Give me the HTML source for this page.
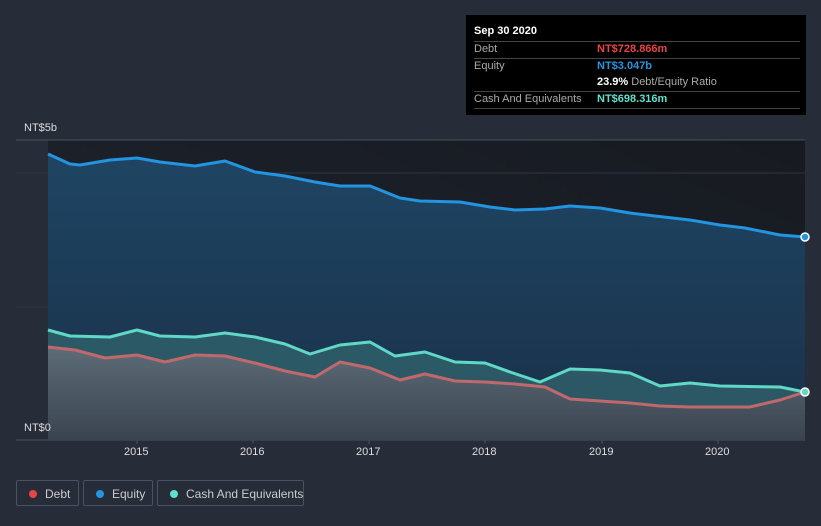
<!DOCTYPE html>
<html><head><style>
body{margin:0;width:821px;height:526px;background:#262c38;font-family:"Liberation Sans",sans-serif;overflow:hidden;position:relative}
.tt{position:absolute;left:466px;top:15px;width:340px;height:100px;background:#000;color:#fff;font-size:11px}
.tt .r{position:absolute;left:8px;right:6px;border-bottom:1px solid #444}
.tt .l{position:absolute;left:0;color:#aaa}
.tt .v{position:absolute;left:123px;font-weight:bold;white-space:nowrap}
.lg{position:absolute;top:480px;height:26px;border:1px solid #4a5160;border-radius:2px;color:#ccc;font-size:12px;line-height:26px;box-sizing:border-box;white-space:nowrap}
.lg i{position:absolute;left:12px;top:9px;width:8px;height:8px;border-radius:50%}
.lg span{position:absolute;left:28px}
.ax{position:absolute;color:#ddd;font-size:11px}
</style></head><body>
<svg width="821" height="526" style="position:absolute;left:0;top:0">
<defs>
<linearGradient id="pb" x1="0" y1="1" x2="1" y2="0"><stop offset="0" stop-color="#1f2532"/><stop offset="1" stop-color="#171a20"/></linearGradient>
<linearGradient id="eq" x1="0" y1="0" x2="0" y2="1"><stop offset="0" stop-color="#1e4563"/><stop offset="1" stop-color="#1a3048"/></linearGradient>
<linearGradient id="db" x1="0" y1="0" x2="0" y2="1"><stop offset="0" stop-color="#5d6c77"/><stop offset="1" stop-color="#3a4450"/></linearGradient>
</defs>
<rect x="48" y="140" width="757" height="300" fill="url(#pb)"/>
<line x1="16" y1="140" x2="805" y2="140" stroke="#4a505c"/>
<line x1="16" y1="173" x2="805" y2="173" stroke="#2f3540"/>
<line x1="16" y1="307" x2="805" y2="307" stroke="#2f3540"/>
<line x1="16" y1="440" x2="805" y2="440" stroke="#4a505c"/>
<g stroke="#4a505c"><line x1="137" y1="440" x2="137" y2="444"/><line x1="253" y1="440" x2="253" y2="444"/><line x1="369" y1="440" x2="369" y2="444"/><line x1="485" y1="440" x2="485" y2="444"/><line x1="602" y1="440" x2="602" y2="444"/><line x1="718" y1="440" x2="718" y2="444"/></g>
<path d="M48,154 L70,164 L80,165 L110,160 L137,158 L160,162 L195,166 L225,161 L255,172 L285,176 L315,182 L340,186 L370,186 L400,198 L420,201 L460,202 L490,207 L515,210 L545,209 L570,206 L600,208 L630,213 L655,216 L690,220 L720,225 L745,228 L780,235 L805,237 L805,440 L48,440Z" fill="url(#eq)"/>
<path d="M48,330 L70,336 L110,337 L137,330 L160,336 L195,337 L225,333 L255,337 L285,344 L310,354 L340,345 L370,342 L395,356 L425,352 L455,362 L485,363 L510,372 L540,382 L570,369 L600,370 L630,373 L660,386 L690,383 L720,386 L780,387 L805,392 L805,440 L48,440Z" fill="#2f5f6a" opacity="0.85"/>
<path d="M48,347 L75,350 L105,358 L137,355 L165,362 L195,355 L225,356 L255,363 L285,371 L315,377 L340,362 L370,368 L400,380 L425,374 L455,381 L485,382 L515,384 L545,387 L570,399 L600,401 L630,403 L660,406 L690,407 L720,407 L750,407 L780,400 L805,392 L805,440 L48,440Z" fill="url(#db)"/>
<g fill="none" stroke-width="3" stroke-linejoin="round">
<path d="M48,154 L70,164 L80,165 L110,160 L137,158 L160,162 L195,166 L225,161 L255,172 L285,176 L315,182 L340,186 L370,186 L400,198 L420,201 L460,202 L490,207 L515,210 L545,209 L570,206 L600,208 L630,213 L655,216 L690,220 L720,225 L745,228 L780,235 L805,237" stroke="#2394df"/>
<path d="M48,347 L75,350 L105,358 L137,355 L165,362 L195,355 L225,356 L255,363 L285,371 L315,377 L340,362 L370,368 L400,380 L425,374 L455,381 L485,382 L515,384 L545,387 L570,399 L600,401 L630,403 L660,406 L690,407 L720,407 L750,407 L780,400 L805,392" stroke="#c0686b"/>
<path d="M48,330 L70,336 L110,337 L137,330 L160,336 L195,337 L225,333 L255,337 L285,344 L310,354 L340,345 L370,342 L395,356 L425,352 L455,362 L485,363 L510,372 L540,382 L570,369 L600,370 L630,373 L660,386 L690,383 L720,386 L780,387 L805,392" stroke="#5fd8c6"/>
</g>
<circle cx="805" cy="237" r="4" fill="#2394df" stroke="#fff" stroke-width="1.5"/>
<circle cx="805" cy="392" r="4" fill="#5fd8c6" stroke="#fff" stroke-width="1.5"/>
</svg>
<div class="ax" style="left:24px;top:122px">NT$5b</div>
<div class="ax" style="left:24px;top:422px">NT$0</div>
<div class="ax" style="left:124px;top:446px">2015</div>
<div class="ax" style="left:240px;top:446px">2016</div>
<div class="ax" style="left:356px;top:446px">2017</div>
<div class="ax" style="left:472px;top:446px">2018</div>
<div class="ax" style="left:589px;top:446px">2019</div>
<div class="ax" style="left:705px;top:446px">2020</div>
<div class="tt">
<div class="r" style="top:8px;height:18px"><b style="position:absolute;left:0;top:2px">Sep 30 2020</b></div>
<div class="r" style="top:26px;height:17px"><span class="l" style="top:2px">Debt</span><span class="v" style="top:2px;color:#e84545">NT$728.866m</span></div>
<div class="r" style="top:43px;height:33px"><span class="l" style="top:2px">Equity</span><span class="v" style="top:2px;color:#2394df">NT$3.047b</span><span class="v" style="top:18px;color:#fff">23.9% <span style="color:#aaa;font-weight:normal">Debt/Equity Ratio</span></span></div>
<div class="r" style="top:76px;height:17px"><span class="l" style="top:2px">Cash And Equivalents</span><span class="v" style="top:2px;color:#5fe0cc">NT$698.316m</span></div>
</div>
<div class="lg" style="left:16px;width:63px"><i style="background:#e84545"></i><span>Debt</span></div>
<div class="lg" style="left:83px;width:70px"><i style="background:#2394df"></i><span>Equity</span></div>
<div class="lg" style="left:157px;width:147px"><i style="background:#5fe0cc"></i><span>Cash And Equivalents</span></div>
</body></html>
